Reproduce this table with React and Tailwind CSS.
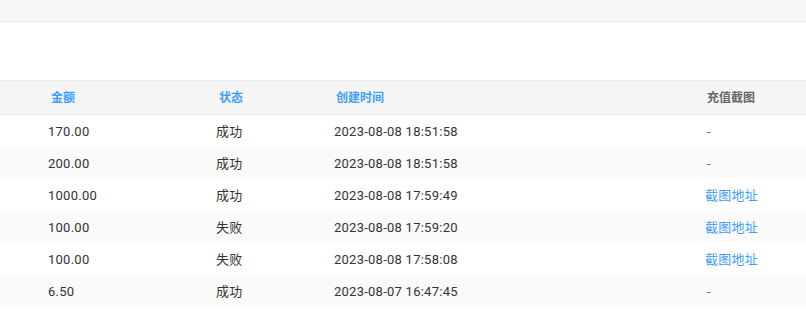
import React from "react";

const rows = [
  ["170.00", "成功", "2023-08-08 18:51:58", null],
  ["200.00", "成功", "2023-08-08 18:51:58", null],
  ["1000.00", "成功", "2023-08-08 17:59:49", "截图地址"],
  ["100.00", "失败", "2023-08-08 17:59:20", "截图地址"],
  ["100.00", "失败", "2023-08-08 17:58:08", "截图地址"],
  ["6.50", "成功", "2023-08-07 16:47:45", null],
];

const font = { fontFamily: "Roboto, 'Noto Sans CJK SC', sans-serif" };

export default function App() {
  return (
    <div className="w-[806px] h-[316px] bg-white overflow-hidden" style={font}>
      <div className="h-[22px] bg-[#f7f7f7] border-b border-[#ebebeb]" />
      <div className="h-[58px]" />
      <div className="grid grid-cols-[216px_118px_371px_1fr] h-[35px] items-center bg-[#f5f5f5] border-y border-[#ebebeb] text-[12px] font-bold">
        <div className="pl-[51px] text-[#409eff]">金额</div>
        <div className="pl-[3px] text-[#409eff]">状态</div>
        <div className="pl-[2px] text-[#409eff]">创建时间</div>
        <div className="pl-[2px] text-[#666]">充值截图</div>
      </div>
      {rows.map((r, i) => (
        <div
          key={i}
          className={`grid grid-cols-[216px_118px_371px_1fr] h-[32px] items-center pt-px text-[13px] tracking-[0.25px] text-[#333] ${i % 2 === 1 ? "bg-[#fafafa]" : "bg-white"}`}
        >
          <div className="pl-[48px]">{r[0]}</div>
          <div>{r[1]}</div>
          <div>{r[2]}</div>
          <div>
            {r[3] ? (
              <span className="text-[#409eff]">{r[3]}</span>
            ) : (
              <span className="pl-[2px] text-[#666]">-</span>
            )}
          </div>
        </div>
      ))}
    </div>
  );
}
